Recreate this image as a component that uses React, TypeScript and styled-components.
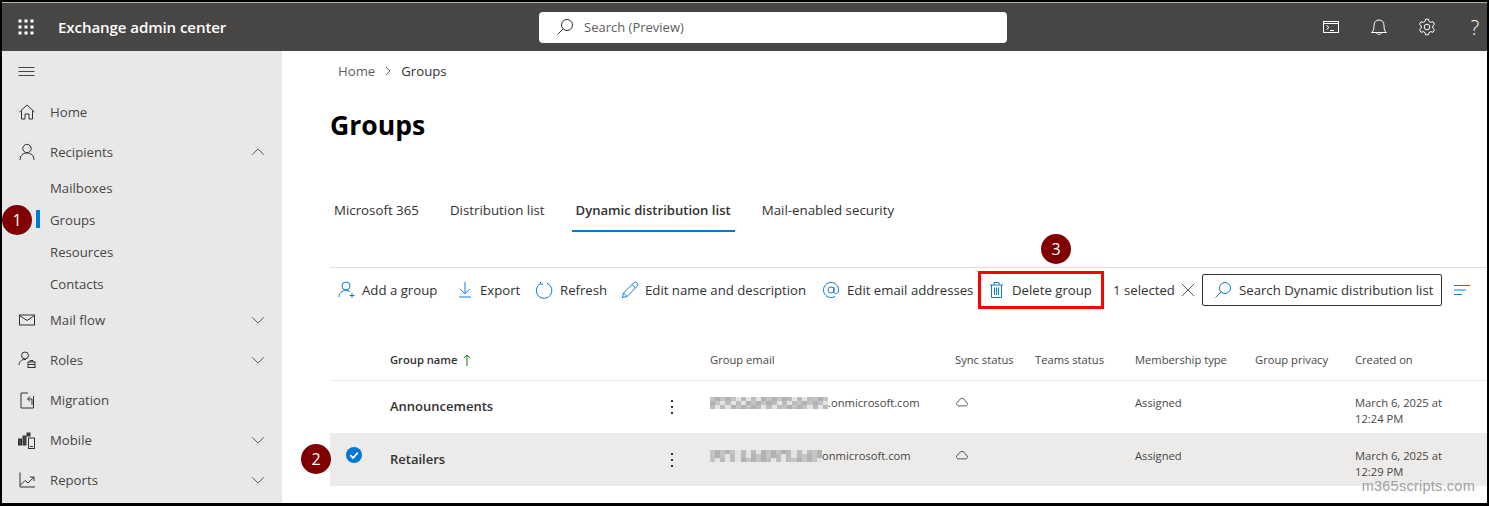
import { createGlobalStyle, styled } from "styled-components"
import type { ReactNode } from "react"

const GlobalStyle = createGlobalStyle`
  html, body {
    margin: 0;
    padding: 0;
    background: #fff;
    overflow: hidden;
  }
  * { box-sizing: border-box; }
`

const font = `"Open Sans", "Noto Sans", sans-serif`

const Frame = styled.div`
  position: relative;
  display: flex;
  flex-direction: column;
  width: 1489px;
  height: 506px;
  overflow: hidden;
  border: solid #000;
  border-width: 2px 2px 3px 2px;
  font-family: ${font};
  font-size: 13.2px;
  color: #323130;
  background: #fff;
`

const Header = styled.header`
  display: grid;
  grid-template-columns: 537px 468px 1fr;
  align-items: center;
  flex: none;
  height: 49px;
  border-top: 1px solid #a9bda3;
  background: #484644;
  color: #fff;
`

const Brand = styled.div`
  display: flex;
  align-items: center;
  gap: 24px;
  padding-left: 16px;
`

const BrandName = styled.span`
  font-size: 15.1px;
  font-weight: 600;
  letter-spacing: -0.1px;
`

const HeaderSearch = styled.div`
  display: flex;
  align-items: center;
  gap: 10px;
  height: 31px;
  padding-left: 17px;
  border-radius: 4px;
  background: #fff;
  color: #605e5c;
  font-size: 13px;
`

const HeaderIcons = styled.div`
  display: flex;
  justify-content: flex-end;
  gap: 24px;
`

const HeaderIcon = styled.span`
  display: flex;
  align-items: center;
  justify-content: center;
  width: 24px;
  height: 24px;
  font-size: 20px;
  font-weight: 300;
`

const Body = styled.div`
  display: flex;
  flex: 1;
  min-height: 0;
`

const Sidebar = styled.nav`
  flex: none;
  width: 280px;
  background: #e8e8e8;
  color: #484644;
`

const Burger = styled.div`
  display: flex;
  align-items: center;
  height: 41px;
  padding-left: 16px;
`

const NavRow = styled.div<{ $sub?: boolean }>`
  position: relative;
  display: flex;
  align-items: center;
  gap: 14px;
  height: ${({ $sub }) => ($sub ? "32px" : "40px")};
  padding: 0 16px 0 ${({ $sub }) => ($sub ? "48px" : "16px")};
`

const NavIcon = styled.span`
  display: flex;
  align-items: center;
  justify-content: center;
  flex: none;
  width: 18px;
  height: 20px;
`

const NavLabel = styled.span`
  flex: 1;
`

const ActiveBar = styled.span`
  position: absolute;
  left: 34px;
  top: 6px;
  width: 4px;
  height: 18px;
  background: #0078d4;
`

const Main = styled.main`
  flex: 1;
  min-width: 0;
  padding-left: 48px;
`

const Crumbs = styled.div`
  display: flex;
  align-items: center;
  gap: 8px;
  height: 39px;
  padding-left: 8px;
`

const CrumbLink = styled.span`
  color: #605e5c;
`

const Title = styled.h1`
  display: flex;
  align-items: center;
  height: 68px;
  margin: 0;
  padding-top: 2px;
  font-size: 26.6px;
  font-weight: 700;
  color: #000;
`

const Tabs = styled.div`
  display: flex;
  gap: 23px;
  margin-top: 30px;
`

const Tab = styled.div<{ $active?: boolean }>`
  display: flex;
  align-items: center;
  height: 44px;
  padding: 2px 4px 0;
  border-bottom: 2px solid ${({ $active }) => ($active ? "#0078d4" : "transparent")};
  font-weight: ${({ $active }) => ($active ? 600 : 400)};
  font-size: ${({ $active }) => ($active ? "13.1px" : "13.3px")};
`

const Toolbar = styled.div`
  display: flex;
  align-items: center;
  height: 45px;
  margin-top: 35px;
  padding-left: 8px;
  border-top: 1px solid #e1dfdd;
`

const ToolButton = styled.div<{ $width: number; $gap?: number }>`
  display: flex;
  flex: none;
  align-items: center;
  gap: ${({ $gap }) => $gap ?? 7}px;
  width: ${({ $width }) => $width}px;
  white-space: nowrap;
`

const DeleteFrame = styled.div`
  display: flex;
  flex: none;
  align-items: center;
  gap: 6px;
  width: 126px;
  height: 38px;
  margin-left: -4px;
  padding-left: 7px;
  border: 3px solid #f00;
  white-space: nowrap;
`

const Selected = styled.span`
  flex: none;
  width: 68px;
  margin-left: 9px;
`

const ToolSearch = styled.div`
  display: flex;
  flex: none;
  align-items: center;
  gap: 7px;
  width: 240px;
  height: 32px;
  margin-left: 7px;
  padding-left: 11px;
  border: 1px solid #323130;
  border-radius: 2px;
  white-space: nowrap;
`

const FilterIcon = styled.span`
  display: flex;
  margin-left: 11px;
`

const Table = styled.div`
  margin-top: 27px;
`

const TableRow = styled.div<{ $head?: boolean; $selected?: boolean }>`
  display: grid;
  grid-template-columns: 60px 270px 50px 245px 80px 100px 120px 100px 1fr;
  height: ${({ $head, $selected }) => ($head ? "42px" : $selected ? "53px" : "52px")};
  padding-top: ${({ $selected }) => ($selected ? "1px" : "0")};
  align-items: ${({ $head }) => ($head ? "center" : "start")};
  border-bottom: ${({ $head }) => ($head ? "1px solid #edebe9" : "none")};
  background: ${({ $selected }) => ($selected ? "#edebe9" : "transparent")};
  font-size: 11.2px;
  color: #484644;
`

const HeadName = styled.span`
  display: flex;
  align-items: center;
  gap: 6px;
  font-weight: 600;
  color: #323130;
`

const Cell = styled.div`
  padding-top: 14px;
  line-height: 16px;
  white-space: nowrap;
`

const CheckCell = styled.div`
  display: flex;
  padding: 13px 0 0 16px;
`

const NameCell = styled.div`
  padding-top: 15px;
  font-size: 13px;
  font-weight: 600;
  line-height: 20px;
  color: #323130;
`

const DotsCell = styled.div`
  display: flex;
  padding: 18px 0 0 10px;
`

const EmailCell = styled(Cell)`
  display: flex;
  align-items: center;
  height: 30px;
`

const Mosaic = styled.span<{ $width: number }>`
  display: grid;
  grid-template-columns: repeat(auto-fit, minmax(5px, 1fr));
  grid-auto-rows: 4px;
  flex: none;
  width: ${({ $width }) => $width}px;
  height: 12px;
  overflow: hidden;
  filter: blur(0.7px);
`

const MosaicCell = styled.span<{ $shade: number }>`
  background: rgb(${({ $shade }) => `${$shade},${$shade},${$shade}`});
`

const Marker = styled.span<{ $x: number; $y: number }>`
  position: absolute;
  left: ${({ $x }) => $x}px;
  top: ${({ $y }) => $y}px;
  display: flex;
  align-items: center;
  justify-content: center;
  width: 30px;
  height: 30px;
  border-radius: 50%;
  background: #800000;
  color: #fff;
  font-size: 16px;
`

const Watermark = styled.span`
  position: absolute;
  right: 12px;
  bottom: 9px;
  font-family: "Liberation Sans", sans-serif;
  font-size: 14.5px;
  letter-spacing: 0.25px;
  color: #9f9f9f;
`

type IconProps = { size?: number; color?: string; children: ReactNode }

function Glyph({ size = 18, color = "currentColor", children }: IconProps) {
  return (
    <svg
      width={size}
      height={size}
      viewBox="0 0 18 18"
      fill="none"
      stroke={color}
      strokeWidth="1"
      style={{ flex: "none" }}
    >
      {children}
    </svg>
  )
}

const blue = "#0f7cd4"

function Waffle() {
  const dots = [0, 6, 12]
  return (
    <svg width="16" height="16" viewBox="0 0 16 16" fill="#fff">
      {dots.map((y) => dots.map((x) => <rect key={`${x}-${y}`} x={x + 0.5} y={y + 0.5} width="3" height="3" />))}
    </svg>
  )
}

function Chevron({ up }: { up?: boolean }) {
  return (
    <Glyph size={16} color="#484644">
      <path d={up ? "M2.5 12 L9 5.5 L15.5 12" : "M2.5 6 L9 12.5 L15.5 6"} />
    </Glyph>
  )
}

const navIcons: Record<string, ReactNode> = {
  home: <path d="M1.5 9 L9 2 L16.5 9 M3.5 7.5 V16 H7 V11 H11 V16 H14.5 V7.5" />,
  person: (
    <>
      <circle cx="9" cy="5.5" r="4.2" />
      <path d="M2 17 C2 12.5 5 10 9 10 C13 10 16 12.5 16 17" />
    </>
  ),
  mail: (
    <>
      <rect x="1.5" y="4" width="15" height="10" />
      <path d="M1.5 4.5 L9 9.5 L16.5 4.5" />
    </>
  ),
  roles: (
    <>
      <circle cx="7" cy="4.5" r="3.5" />
      <path d="M1 14 C1 10.5 3.5 8.5 7 8.5 H8" />
      <rect x="10" y="11" width="7" height="5.5" />
      <path d="M12 11 V9.5 H15 V11 M10 13.5 H17" />
    </>
  ),
  migration: (
    <>
      <path d="M10 2 H3 V17 H15.5 V5" />
      <path d="M14 14 V8 H10 M12 5.5 L9.5 8 L12 10.5" />
    </>
  ),
  mobile: (
    <>
      <rect x="0.5" y="8" width="3" height="6" fill="#484644" />
      <rect x="5" y="5" width="3" height="9" fill="#484644" />
      <rect x="9" y="2" width="3" height="3" fill="#484644" />
      <rect x="10.5" y="7" width="6" height="10.5" />
      <path d="M12 15.5 H15" />
    </>
  ),
  reports: (
    <>
      <path d="M2 1.5 V16 H17" />
      <path d="M2.5 14 L7 9.5 L10 12 L15.5 6.5 M12 6 H16 V10" />
    </>
  ),
}

function Cloud() {
  return (
    <Glyph size={14} color="#323130">
      <path d="M5 14 H13 C15 14 16 12.8 16 11.3 C16 9.8 15 8.8 13.5 8.6 C13 6 11.2 4.5 9 4.5 C6.8 4.5 5 6 4.6 8.4 C3 8.6 2 9.8 2 11.2 C2 12.8 3.2 14 5 14 Z" />
    </Glyph>
  )
}

function Dots() {
  return (
    <svg width="4" height="16" viewBox="0 0 4 16" fill="#323130">
      <rect x="1" y="1" width="2" height="2" />
      <rect x="1" y="7" width="2" height="2" />
      <rect x="1" y="13" width="2" height="2" />
    </svg>
  )
}

function SearchGlass({ color }: { color: string }) {
  return (
    <Glyph color={color}>
      <circle cx="11" cy="7" r="5.5" />
      <path d="M7 11 L1.5 16.5" />
    </Glyph>
  )
}

const shades = [196, 222, 170, 214, 232, 188, 205, 160, 226, 210, 178, 236, 198, 218, 182, 228, 204, 168, 224, 192]

function Blur({ width }: { width: number }) {
  const count = Math.floor(width / 5) * 3
  return (
    <Mosaic $width={width}>
      {Array.from({ length: count }, (_, i) => (
        <MosaicCell key={i} $shade={shades[(i * 7 + (i % 5) * 3) % shades.length]} />
      ))}
    </Mosaic>
  )
}

type NavEntry = { label: string; icon?: string; chevron?: "up" | "down"; sub?: boolean; active?: boolean }

const nav: NavEntry[] = [
  { label: "Home", icon: "home" },
  { label: "Recipients", icon: "person", chevron: "up" },
  { label: "Mailboxes", sub: true },
  { label: "Groups", sub: true, active: true },
  { label: "Resources", sub: true },
  { label: "Contacts", sub: true },
  { label: "Mail flow", icon: "mail", chevron: "down" },
  { label: "Roles", icon: "roles", chevron: "down" },
  { label: "Migration", icon: "migration" },
  { label: "Mobile", icon: "mobile", chevron: "down" },
  { label: "Reports", icon: "reports", chevron: "down" },
]

const rows = [
  { name: "Announcements", blur: 118, domain: ".onmicrosoft.com", time: "12:24 PM" },
  { name: "Retailers", blur: 112, domain: "onmicrosoft.com", time: "12:29 PM", selected: true },
]

export default function App() {
  return (
    <>
      <GlobalStyle />
      <Frame>
        <Header>
          <Brand>
            <Waffle />
            <BrandName>Exchange admin center</BrandName>
          </Brand>
          <HeaderSearch>
            <SearchGlass color="#323130" />
            Search (Preview)
          </HeaderSearch>
          <HeaderIcons>
            <HeaderIcon>
              <Glyph>
                <rect x="1.5" y="3.5" width="15" height="11" />
                <path d="M1.5 5.5 H16.5 M4.5 7.5 L7 9.5 L4.5 11.5 M8 12.5 H12" />
              </Glyph>
            </HeaderIcon>
            <HeaderIcon>
              <Glyph>
                <path d="M1.5 14.5 H16.5 C14.5 13 14 11.5 14 7.5 C14 4 12 2 9 2 C6 2 4 4 4 7.5 C4 11.5 3.5 13 1.5 14.5 Z" />
                <path d="M7 15 C7 17 11 17 11 15" />
              </Glyph>
            </HeaderIcon>
            <HeaderIcon>
              <Glyph>
                <circle cx="9" cy="9" r="2.8" />
                <path d="M7.5 1.2 H10.5 L11 3.4 L12.8 4.4 L15 3.7 L16.5 6.3 L14.8 7.8 V10.2 L16.5 11.7 L15 14.3 L12.8 13.6 L11 14.6 L10.5 16.8 H7.5 L7 14.6 L5.2 13.6 L3 14.3 L1.5 11.7 L3.2 10.2 V7.8 L1.5 6.3 L3 3.7 L5.2 4.4 L7 3.4 Z" />
              </Glyph>
            </HeaderIcon>
            <HeaderIcon>?</HeaderIcon>
          </HeaderIcons>
        </Header>
        <Body>
          <Sidebar>
            <Burger>
              <Glyph>
                <path d="M0.5 4.5 H16.5 M0.5 8.5 H16.5 M0.5 12.5 H16.5" />
              </Glyph>
            </Burger>
            {nav.map((item) => (
              <NavRow key={item.label} $sub={item.sub}>
                {item.active ? <ActiveBar /> : null}
                {item.icon ? (
                  <NavIcon>
                    <Glyph color="#323130">{navIcons[item.icon]}</Glyph>
                  </NavIcon>
                ) : null}
                <NavLabel>{item.label}</NavLabel>
                {item.chevron ? <Chevron up={item.chevron === "up"} /> : null}
              </NavRow>
            ))}
          </Sidebar>
          <Main>
            <Crumbs>
              <CrumbLink>Home</CrumbLink>
              <svg width="10" height="10" viewBox="0 0 10 10" fill="none" stroke="#605e5c">
                <path d="M3 1 L7 5 L3 9" />
              </svg>
              Groups
            </Crumbs>
            <Title>Groups</Title>
            <Tabs>
              <Tab>Microsoft 365</Tab>
              <Tab>Distribution list</Tab>
              <Tab $active>Dynamic distribution list</Tab>
              <Tab>Mail-enabled security</Tab>
            </Tabs>
            <Toolbar>
              <ToolButton $width={119} $gap={6}>
                <Glyph color={blue}>
                  <circle cx="8" cy="5" r="4" />
                  <path d="M1 16 C1 12 4 9.5 8 9.5 C9.5 9.5 11 10 12 10.5 M14 12 V17 M11.5 14.5 H16.5" />
                </Glyph>
                Add a group
              </ToolButton>
              <ToolButton $width={78} $gap={5}>
                <Glyph color={blue}>
                  <path d="M8 1 V12.5 M3 7.8 L8 12.8 L13 7.8 M2 16 H14" />
                </Glyph>
                Export
              </ToolButton>
              <ToolButton $width={86}>
                <Glyph color={blue}>
                  <path d="M5.5 2.6 A7.8 7.8 0 1 0 12 2.3 M5.5 0.8 V3.2 H8" />
                </Glyph>
                Refresh
              </ToolButton>
              <ToolButton $width={201} $gap={6}>
                <Glyph color={blue}>
                  <path d="M1.5 16.5 L2.5 12 L12.5 2 C13.5 1 15 1 16 2 C17 3 17 4.5 16 5.5 L6 15.5 Z M11 3.5 L14.5 7 M2.5 12 L6 15.5" />
                </Glyph>
                Edit name and description
              </ToolButton>
              <ToolButton $width={160} $gap={7}>
                <Glyph color={blue}>
                  <circle cx="9" cy="9" r="3" />
                  <path d="M12 6 V11 C12 13.5 16.5 13.5 16.5 9 C16.5 4.5 13 1.5 9 1.5 C5 1.5 1.5 4.8 1.5 9 C1.5 13.5 5 16.5 9 16.5 C10.5 16.5 11.7 16.2 13 15.5" />
                </Glyph>
                Edit email addresses
              </ToolButton>
              <DeleteFrame>
                <Glyph color={blue}>
                  <path d="M2 4 H15 M6 4 V1.5 H11 V4 M3.5 4 V16.5 H13.5 V4 M6.5 6.5 V14 M8.5 6.5 V14 M10.5 6.5 V14" />
                </Glyph>
                Delete group
              </DeleteFrame>
              <Selected>1 selected</Selected>
              <Glyph size={14} color="#323130">
                <path d="M1 1 L17 17 M17 1 L1 17" />
              </Glyph>
              <ToolSearch>
                <SearchGlass color={blue} />
                Search Dynamic distribution list
              </ToolSearch>
              <FilterIcon>
                <Glyph color={blue}>
                  <path d="M1 4.5 H17 M1 9 H13 M1 13.5 H9" />
                </Glyph>
              </FilterIcon>
            </Toolbar>
            <Table>
              <TableRow $head>
                <span />
                <HeadName>
                  Group name
                  <svg width="8" height="12" viewBox="0 0 8 12" fill="none" stroke="#107c10">
                    <path d="M4 12 V1 M0.8 4 L4 1 L7.2 4" />
                  </svg>
                </HeadName>
                <span />
                <span>Group email</span>
                <span>Sync status</span>
                <span>Teams status</span>
                <span>Membership type</span>
                <span>Group privacy</span>
                <span>Created on</span>
              </TableRow>
              {rows.map((row) => (
                <TableRow key={row.name} $selected={row.selected}>
                  <CheckCell>
                    {row.selected ? (
                      <svg width="16" height="16" viewBox="0 0 16 16">
                        <circle cx="8" cy="8" r="8" fill="#0078d4" />
                        <path d="M4.2 8.2 L7 11 L11.8 5.6" fill="none" stroke="#fff" strokeWidth="1.8" />
                      </svg>
                    ) : null}
                  </CheckCell>
                  <NameCell>{row.name}</NameCell>
                  <DotsCell>
                    <Dots />
                  </DotsCell>
                  <EmailCell>
                    <Blur width={row.blur} />
                    {row.domain}
                  </EmailCell>
                  <Cell>
                    <Cloud />
                  </Cell>
                  <span />
                  <Cell>Assigned</Cell>
                  <span />
                  <Cell>
                    March 6, 2025 at
                    <br />
                    {row.time}
                  </Cell>
                </TableRow>
              ))}
            </Table>
          </Main>
        </Body>
        <Marker $x={0} $y={203}>1</Marker>
        <Marker $x={299} $y={442}>2</Marker>
        <Marker $x={1039} $y={232}>3</Marker>
        <Watermark>m365scripts.com</Watermark>
      </Frame>
    </>
  )
}
